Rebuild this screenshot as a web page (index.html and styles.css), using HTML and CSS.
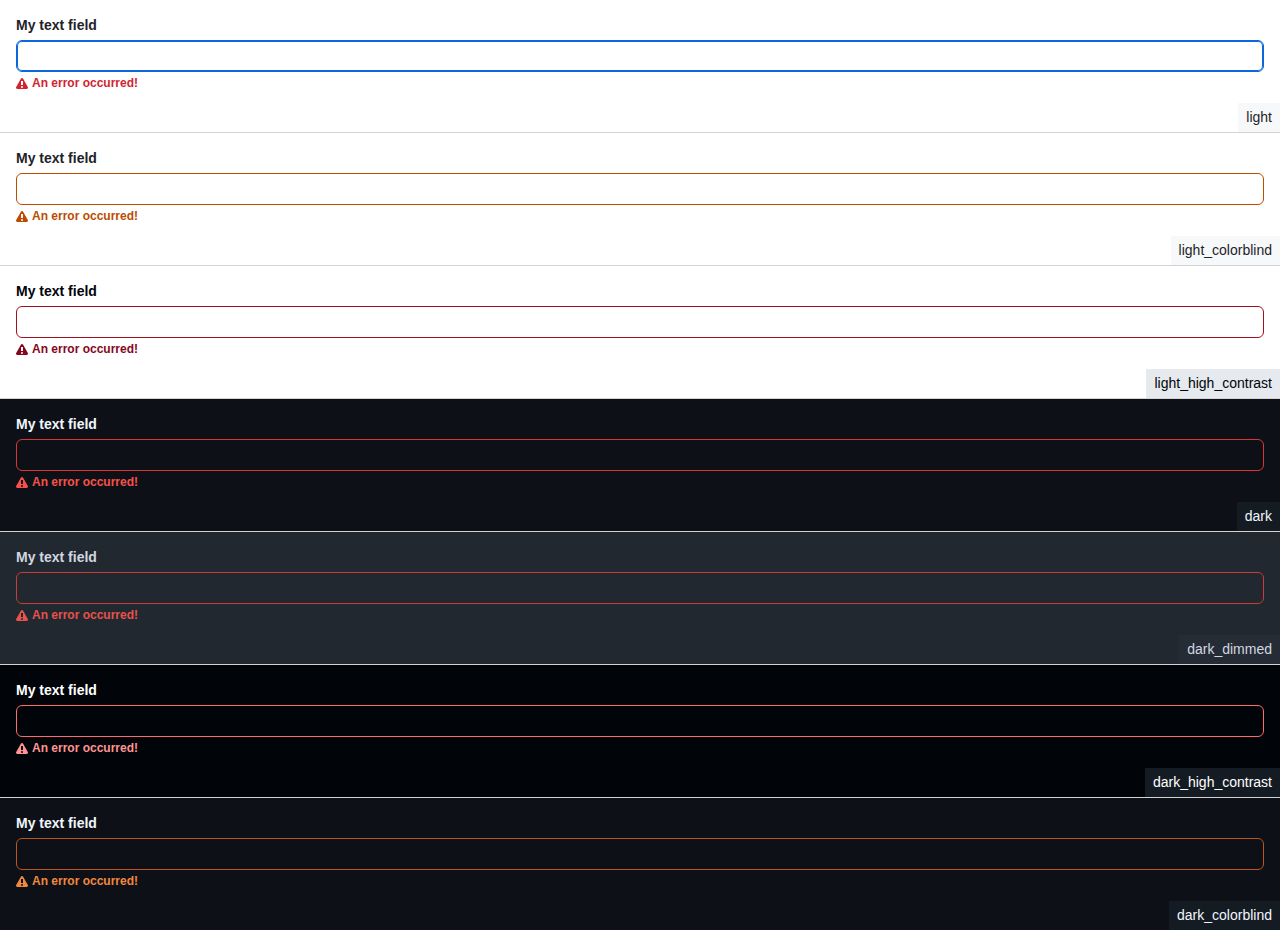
FILE: index.html
```
<!DOCTYPE html>
<html lang="en">
<head>
<meta charset="utf-8">
<title>Text field themes</title>
<link rel="stylesheet" href="styles.css">
</head>
<body>
<svg class="sprite" aria-hidden="true"><symbol id="alert" viewBox="0 0 12 12"><path d="M4.855.708c.5-.896 1.79-.896 2.29 0l4.675 8.351a1.312 1.312 0 0 1-1.146 1.954H1.33A1.313 1.313 0 0 1 .183 9.058ZM7 7V3H5v4Zm-1 3a1 1 0 1 0 0-2 1 1 0 0 0 0 2Z"/></symbol></svg>
<main>
<section class="theme light">
  <div class="field"><label class="label" for="f1">My text field</label><input class="input" id="f1" type="text" aria-describedby="e1" autofocus>
  <p class="error" id="e1"><svg class="icon" aria-hidden="true"><use href="#alert"/></svg><span>An error occurred!</span></p></div>
  <div class="name">light</div>
</section>
<section class="theme light-colorblind">
  <div class="field"><label class="label" for="f2">My text field</label><input class="input" id="f2" type="text" aria-describedby="e2">
  <p class="error" id="e2"><svg class="icon" aria-hidden="true"><use href="#alert"/></svg><span>An error occurred!</span></p></div>
  <div class="name">light_colorblind</div>
</section>
<section class="theme light-high-contrast">
  <div class="field"><label class="label" for="f3">My text field</label><input class="input" id="f3" type="text" aria-describedby="e3">
  <p class="error" id="e3"><svg class="icon" aria-hidden="true"><use href="#alert"/></svg><span>An error occurred!</span></p></div>
  <div class="name">light_high_contrast</div>
</section>
<section class="theme dark">
  <div class="field"><label class="label" for="f4">My text field</label><input class="input" id="f4" type="text" aria-describedby="e4">
  <p class="error" id="e4"><svg class="icon" aria-hidden="true"><use href="#alert"/></svg><span>An error occurred!</span></p></div>
  <div class="name">dark</div>
</section>
<section class="theme dark-dimmed">
  <div class="field"><label class="label" for="f5">My text field</label><input class="input" id="f5" type="text" aria-describedby="e5">
  <p class="error" id="e5"><svg class="icon" aria-hidden="true"><use href="#alert"/></svg><span>An error occurred!</span></p></div>
  <div class="name">dark_dimmed</div>
</section>
<section class="theme dark-high-contrast">
  <div class="field"><label class="label" for="f6">My text field</label><input class="input" id="f6" type="text" aria-describedby="e6">
  <p class="error" id="e6"><svg class="icon" aria-hidden="true"><use href="#alert"/></svg><span>An error occurred!</span></p></div>
  <div class="name">dark_high_contrast</div>
</section>
<section class="theme dark-colorblind">
  <div class="field"><label class="label" for="f7">My text field</label><input class="input" id="f7" type="text" aria-describedby="e7">
  <p class="error" id="e7"><svg class="icon" aria-hidden="true"><use href="#alert"/></svg><span>An error occurred!</span></p></div>
  <div class="name">dark_colorblind</div>
</section>
</main>
</body>
</html>
```
FILE: styles.css
```
* { box-sizing: border-box; }
body {
  margin: 0;
  font-family: "Liberation Sans", Arial, sans-serif;
  font-size: 14px;
  line-height: 21px;
}
.sprite { display: none; }
.theme {
  display: flex;
  flex-direction: column;
  background: var(--bg);
  color: var(--fg);
  border-bottom: 1px solid #d3d3d3;
}
.theme:last-child { border-bottom: 0; }
.field {
  display: flex;
  flex-direction: column;
  gap: 4px;
  padding: 16px 16px 12px;
}
.label {
  align-self: flex-start;
  padding-bottom: 2px;
  font-weight: 600;
  line-height: 18px;
}
.input {
  width: 100%;
  height: 32px;
  padding: 0 12px;
  font: inherit;
  color: var(--fg);
  background: var(--bg);
  border: 1px solid var(--border);
  border-radius: 6px;
}
.input:focus {
  border-color: #0969da;
  outline: none;
  box-shadow: inset 0 0 0 1px #0969da;
}
.error {
  display: flex;
  align-items: flex-start;
  gap: 4px;
  margin: 0;
  font-size: 12px;
  font-weight: 600;
  line-height: 15px;
  color: var(--danger);
}
.icon {
  width: 12px;
  height: 12px;
  margin-top: 2px;
  fill: currentColor;
}
.name {
  align-self: flex-end;
  padding: 4px 8px;
  background: var(--inset);
}
.light { --bg: #ffffff; --fg: #1f2328; --inset: #f6f8fa; --border: #cf222e; --danger: #d1242f; }
.light-colorblind { --bg: #ffffff; --fg: #1f2328; --inset: #f6f8fa; --border: #bc4c00; --danger: #bc4c00; }
.light-high-contrast { --bg: #ffffff; --fg: #010409; --inset: #e6eaef; --border: #a0111f; --danger: #86061d; }
.dark { --bg: #0d1117; --fg: #f0f6fc; --inset: #151b23; --border: #da3633; --danger: #f85149; }
.dark-dimmed { --bg: #212830; --fg: #d1d7e0; --inset: #262c36; --border: #c93c37; --danger: #e5534b; }
.dark-high-contrast { --bg: #010409; --fg: #ffffff; --inset: #151b23; --border: #ff6a69; --danger: #ff9492; }
.dark-colorblind { --bg: #0d1117; --fg: #f0f6fc; --inset: #151b23; --border: #bd561d; --danger: #f0883e; }
```
